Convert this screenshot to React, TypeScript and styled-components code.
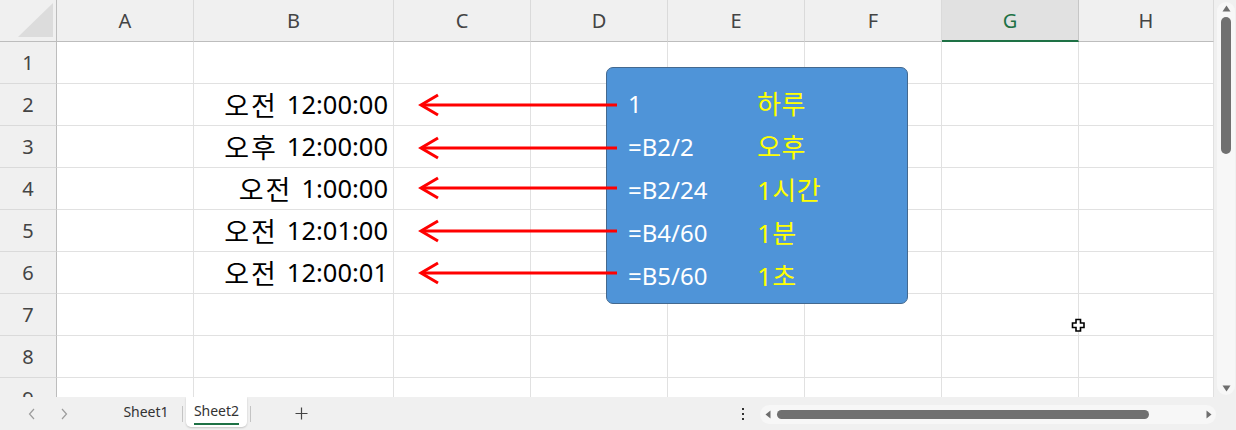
import React from "react";
import styled, { createGlobalStyle } from "styled-components";

const GlobalStyle = createGlobalStyle`
  html, body { margin: 0; padding: 0; background: #f0f0f0; overflow: hidden; }
  body { font-family: "Noto Sans", "Noto Sans CJK KR", sans-serif; }
`;

type Column = { key: string; width: number };

const COLUMNS: Column[] = [
  { key: "A", width: 137 },
  { key: "B", width: 200 },
  { key: "C", width: 137 },
  { key: "D", width: 137 },
  { key: "E", width: 137 },
  { key: "F", width: 137 },
  { key: "G", width: 137 },
  { key: "H", width: 135 },
];

const SELECTED_COLUMN = "G";

// Time values in column B, split into the meridiem and the clock part
const CELL_VALUES: Record<number, [string, string]> = {
  2: ["오전", "12:00:00"],
  3: ["오후", "12:00:00"],
  4: ["오전", "1:00:00"],
  5: ["오전", "12:01:00"],
  6: ["오전", "12:00:01"],
};

const NOTES = [
  { formula: "1", label: "하루" },
  { formula: "=B2/2", label: "오후" },
  { formula: "=B2/24", label: "1시간" },
  { formula: "=B4/60", label: "1분" },
  { formula: "=B5/60", label: "1초" },
];

const ARROW_Y = [105, 148, 188, 231, 273];

const Window = styled.div`
  width: 1236px;
  height: 430px;
  display: flex;
  flex-direction: column;
  background: #f0f0f0;
  overflow: hidden;
`;

const Workspace = styled.div`
  display: flex;
  height: 397px;
`;

const Sheet = styled.div`
  position: relative;
  width: 1214px;
  height: 397px;
  overflow: hidden;
  background: #ffffff;
`;

const Grid = styled.div<{ $columns: string }>`
  display: grid;
  grid-template-columns: ${(p) => p.$columns};
  grid-auto-rows: 42px;
`;

const Corner = styled.div`
  box-sizing: border-box;
  background: #f0f0f0;
  border-right: 1px solid #bdbdbd;
  border-bottom: 1px solid #bdbdbd;
  display: flex;
  align-items: flex-end;
  justify-content: flex-end;
  padding: 0 3px 4px 0;
`;

const ColumnHeader = styled.div<{ $selected?: boolean }>`
  box-sizing: border-box;
  display: flex;
  align-items: center;
  justify-content: center;
  font-size: 20px;
  line-height: 1;
  color: ${(p) => (p.$selected ? "#1e7145" : "#444444")};
  background: ${(p) => (p.$selected ? "#e1e1e1" : "#f0f0f0")};
  border-right: 1px solid ${(p) => (p.$selected ? "#c6c6c6" : "#dadada")};
  border-bottom: ${(p) => (p.$selected ? "2px solid #1e7145" : "1px solid #bdbdbd")};
  padding-top: ${(p) => (p.$selected ? "1px" : "0")};
`;

const RowHeader = styled.div`
  box-sizing: border-box;
  display: flex;
  align-items: center;
  justify-content: center;
  font-size: 20px;
  line-height: 1;
  color: #444444;
  background: #f0f0f0;
  border-right: 1px solid #bdbdbd;
  border-bottom: 1px solid #dadada;
`;

const Cell = styled.div`
  box-sizing: border-box;
  display: flex;
  align-items: center;
  justify-content: flex-end;
  padding: 0 5px 0 0;
  border-right: 1px solid #e1e1e1;
  border-bottom: 1px solid #e1e1e1;
  font-family: "Noto Sans", "Noto Sans CJK KR", sans-serif;
  font-size: 25.5px;
  line-height: 1;
  color: #000000;
  white-space: nowrap;
`;

const Meridiem = styled.span`
  font-family: "Noto Sans CJK KR", sans-serif;
  font-size: 27px;
  letter-spacing: 2px;
  margin-right: 9px;
`;

const Callout = styled.div`
  position: absolute;
  left: 606px;
  top: 67px;
  width: 302px;
  height: 237px;
  box-sizing: border-box;
  background: #4f94d8;
  border: 1.5px solid #44698f;
  border-radius: 7px;
  padding: 14px 0 0 21px;
  display: flex;
  flex-direction: column;
`;

const NoteRow = styled.div`
  display: grid;
  grid-template-columns: 129px auto;
  align-items: center;
  height: 43px;
  font-family: "Noto Sans", "Noto Sans CJK KR", sans-serif;
  font-size: 24px;
  line-height: 1;
`;

const Formula = styled.span`
  color: #ffffff;
`;

const NoteLabel = styled.span`
  color: #ffff00;
  font-size: 26px;
  letter-spacing: 0.5px;
`;

const ArrowLayer = styled.svg`
  position: absolute;
  left: 0;
  top: 0;
  pointer-events: none;
`;

const Pointer = styled.svg`
  position: absolute;
  left: 1071px;
  top: 318px;
`;

const VScroll = styled.div`
  width: 22px;
  height: 397px;
  box-sizing: border-box;
  padding: 2px 1px 2px 3px;
  background: #f0f0f0;
`;

const VTrack = styled.div`
  height: 100%;
  background: #f7f7f7;
  border-radius: 9px;
  display: flex;
  flex-direction: column;
  align-items: center;
`;

const VThumb = styled.div`
  width: 10px;
  height: 137px;
  margin-top: 5px;
  border-radius: 5px;
  background: #707070;
`;

const Spacer = styled.div`
  flex: 1;
`;

const TabBar = styled.div`
  height: 33px;
  display: flex;
  align-items: stretch;
  padding: 0 20px 0 16px;
  background: #f0f0f0;
`;

const NavButton = styled.div`
  width: 32px;
  display: flex;
  align-items: center;
  justify-content: center;
`;

const SheetTab = styled.div<{ $active?: boolean; $width: number; $offset?: number }>`
  width: ${(p) => p.$width}px;
  margin-left: ${(p) => p.$offset ?? 0}px;
  display: flex;
  justify-content: center;
  align-items: ${(p) => (p.$active ? "flex-start" : "center")};
  padding-top: ${(p) => (p.$active ? "4px" : "0")};
  box-sizing: border-box;
  margin-bottom: ${(p) => (p.$active ? "3px" : "0")};
  background: ${(p) => (p.$active ? "#ffffff" : "transparent")};
  border-radius: 0 0 5px 5px;
  box-shadow: ${(p) => (p.$active ? "0 1px 2px rgba(0,0,0,0.18)" : "none")};
  font-size: 14px;
  color: #333333;
`;

const TabName = styled.span<{ $active?: boolean }>`
  line-height: 20px;
  padding-bottom: 2px;
  border-bottom: ${(p) => (p.$active ? "2px solid #1e7145" : "2px solid transparent")};
`;

const TabDivider = styled.div`
  width: 1px;
  height: 16px;
  align-self: center;
  margin: 0 3px;
  background: #c4c4c4;
`;

const AddButton = styled.div`
  width: 40px;
  margin-left: 27px;
  display: flex;
  align-items: center;
  justify-content: center;
`;

const MoreButton = styled.div`
  width: 20px;
  margin-left: auto;
  display: flex;
  align-items: center;
  justify-content: center;
`;

const HTrack = styled.div`
  width: 456px;
  height: 19px;
  margin: 8px 0 0 7px;
  box-sizing: border-box;
  padding: 0 4px 0 5px;
  background: #f7f7f7;
  border-radius: 10px;
  display: flex;
  align-items: center;
`;

const HThumb = styled.div`
  width: 372px;
  height: 9px;
  margin-left: 6px;
  border-radius: 5px;
  background: #707070;
`;

const TriangleUp = () => (
  <svg width="9" height="7" viewBox="0 0 9 7" style={{ marginTop: 3 }}>
    <path d="M4.5 0.5 L8.5 6.5 L0.5 6.5 Z" fill="#6e6e6e" />
  </svg>
);

const TriangleDown = () => (
  <svg width="9" height="7" viewBox="0 0 9 7" style={{ marginBottom: 3 }}>
    <path d="M0.5 0.5 L8.5 0.5 L4.5 6.5 Z" fill="#6e6e6e" />
  </svg>
);

const TriangleLeft = () => (
  <svg width="6" height="9" viewBox="0 0 6 9">
    <path d="M5.5 0.5 L5.5 8.5 L0.5 4.5 Z" fill="#6e6e6e" />
  </svg>
);

const TriangleRight = () => (
  <svg width="6" height="9" viewBox="0 0 6 9" style={{ marginLeft: "auto" }}>
    <path d="M0.5 0.5 L5.5 4.5 L0.5 8.5 Z" fill="#6e6e6e" />
  </svg>
);

const Chevron = ({ dir }: { dir: "left" | "right" }) => (
  <svg width="8" height="12" viewBox="0 0 8 12">
    <path
      d={dir === "left" ? "M6 1 L1.5 6 L6 11" : "M2 1 L6.5 6 L2 11"}
      fill="none"
      stroke="#9c9c9c"
      strokeWidth="1.2"
    />
  </svg>
);

export default function App() {
  const columnTemplate = ["57px", ...COLUMNS.map((c) => `${c.width}px`)].join(" ");
  const rows = [1, 2, 3, 4, 5, 6, 7, 8, 9];

  return (
    <>
      <GlobalStyle />
      <Window>
        <Workspace>
          <Sheet>
            <Grid $columns={columnTemplate}>
              <Corner>
                <svg width="35" height="34" viewBox="0 0 35 34">
                  <path d="M35 0 L35 34 L0 34 Z" fill="#dcdcdc" />
                </svg>
              </Corner>
              {COLUMNS.map((c) => (
                <ColumnHeader key={c.key} $selected={c.key === SELECTED_COLUMN}>
                  {c.key}
                </ColumnHeader>
              ))}
              {rows.map((r) => (
                <React.Fragment key={r}>
                  <RowHeader>{r}</RowHeader>
                  {COLUMNS.map((c) => {
                    const value = c.key === "B" ? CELL_VALUES[r] : undefined;
                    return (
                      <Cell key={c.key}>
                        {value && (
                          <>
                            <Meridiem>{value[0]}</Meridiem>
                            {value[1]}
                          </>
                        )}
                      </Cell>
                    );
                  })}
                </React.Fragment>
              ))}
            </Grid>

            <Callout>
              {NOTES.map((n) => (
                <NoteRow key={n.formula}>
                  <Formula>{n.formula}</Formula>
                  <NoteLabel>{n.label}</NoteLabel>
                </NoteRow>
              ))}
            </Callout>

            <ArrowLayer width="1214" height="397" viewBox="0 0 1214 397">
              {ARROW_Y.map((y) => (
                <g key={y} fill="none" stroke="#ff0000" strokeWidth="3" strokeLinecap="butt">
                  <line x1="422" y1={y} x2="617" y2={y} />
                  <polyline points={`438,${y - 10} 421,${y} 438,${y + 10}`} strokeLinejoin="miter" />
                </g>
              ))}
            </ArrowLayer>

            <Pointer width="15" height="15" viewBox="0 0 15 15">
              <path
                d="M5 1.5 H9.5 V5 H13 V9.5 H9.5 V13 H5 V9.5 H1.5 V5 H5 Z"
                fill="#ffffff"
                stroke="#000000"
                strokeWidth="1.6"
              />
            </Pointer>
          </Sheet>

          <VScroll>
            <VTrack>
              <TriangleUp />
              <VThumb />
              <Spacer />
              <TriangleDown />
            </VTrack>
          </VScroll>
        </Workspace>

        <TabBar>
          <NavButton>
            <Chevron dir="left" />
          </NavButton>
          <NavButton>
            <Chevron dir="right" />
          </NavButton>
          <SheetTab $width={66} $offset={33}>
            <TabName>Sheet1</TabName>
          </SheetTab>
          <TabDivider />
          <SheetTab $active $width={61}>
            <TabName $active>Sheet2</TabName>
          </SheetTab>
          <TabDivider />
          <AddButton>
            <svg width="13" height="13" viewBox="0 0 13 13">
              <path d="M6.5 0.5 V12.5 M0.5 6.5 H12.5" stroke="#444444" strokeWidth="1.2" />
            </svg>
          </AddButton>
          <MoreButton>
            <svg width="4" height="12" viewBox="0 0 4 12">
              <rect x="1" y="0" width="2" height="2" fill="#333" />
              <rect x="1" y="5" width="2" height="2" fill="#333" />
              <rect x="1" y="10" width="2" height="2" fill="#333" />
            </svg>
          </MoreButton>
          <HTrack>
            <TriangleLeft />
            <HThumb />
            <TriangleRight />
          </HTrack>
        </TabBar>
      </Window>
    </>
  );
}
